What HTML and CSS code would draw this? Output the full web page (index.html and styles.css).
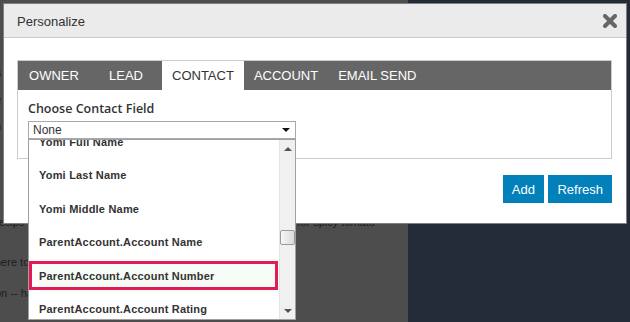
FILE: index.html
```html
<!DOCTYPE html>
<html lang="en">

<head>
  <meta charset="UTF-8">
  <meta name="viewport" content="width=device-width, initial-scale=1.0">
  <title>Personalize</title>
  <link rel="stylesheet" href="styles.css">
</head>

<body>
  <!-- page behind the modal -->
  <div class="page">
    <div class="content">
      <p class="intro">a</p>
      <p class="intro">e</p>
      <p class="intro">n</p>
      <p class="line line-split"><span>recipe</span><span>for spicy tomato</span></p>
      <p class="line">here to</p>
      <p class="line">on -- ha</p>
    </div>
    <div class="side"></div>
  </div>

  <div class="dialog">
    <div class="dialog-head">
      <span class="dialog-title">Personalize</span>
      <svg class="dialog-close" width="14" height="14" viewBox="0 0 14 14">
        <path d="M2 2 L12 12 M12 2 L2 12" stroke="#666" stroke-width="4" stroke-linecap="round" fill="none" />
      </svg>
    </div>
    <div class="dialog-body">
      <div class="panel">
        <ul class="tabs">
          <li class="tab">OWNER</li>
          <li class="tab">LEAD</li>
          <li class="tab active">CONTACT</li>
          <li class="tab">ACCOUNT</li>
          <li class="tab">EMAIL SEND</li>
        </ul>
        <div class="panel-body">
          <div class="field-label">Choose Contact Field</div>
          <div class="select">
            <span>None</span>
            <span class="select-arrow"></span>
            <!-- open option list -->
            <div class="dropdown">
              <div class="options">
                <div class="options-inner">
                  <div class="option">Yomi Full Name</div>
                  <div class="option">Yomi Last Name</div>
                  <div class="option">Yomi Middle Name</div>
                  <div class="option">ParentAccount.Account Name</div>
                  <div class="option marked">ParentAccount.Account Number</div>
                  <div class="option">ParentAccount.Account Rating</div>
                </div>
              </div>
              <div class="scrollbar">
                <div class="scroll-btn"><span class="tri-up"></span></div>
                <div class="scroll-track"><div class="scroll-thumb"></div></div>
                <div class="scroll-btn"><span class="tri-down"></span></div>
              </div>
            </div>
          </div>
        </div>
      </div>
      <div class="actions">
        <button class="btn">Add</button>
        <button class="btn">Refresh</button>
      </div>
    </div>
  </div>
</body>

</html>
```

FILE: styles.css
```css
* {
  padding: 0;
  margin: 0;
  box-sizing: border-box;
}

body {
  width: 630px;
  height: 322px;
  overflow: hidden;
  font-family: "Liberation Sans", Arial, sans-serif;
  background-color: #232b36;
}

/* 背景页面 */
.page {
  display: flex;
  height: 322px;
}

.content {
  width: 408px;
  background-color: #4d4d4d;
  color: #1c1c1c;
  font-size: 11px;
  padding-top: 64px;
}

.content p {
  margin-left: -5px;
  white-space: nowrap;
}

.intro {
  line-height: 16px;
  margin-bottom: 11px;
}

.line {
  line-height: 16px;
}

.line-split {
  display: flex;
  justify-content: space-between;
  width: 380px;
  margin-top: 80px;
  margin-bottom: 24px;
}

.line-split + .line {
  margin-bottom: 15px;
}

.side {
  flex: 1;
}

/* 弹窗 */
.dialog {
  position: absolute;
  left: 3px;
  top: 3px;
  width: 624px;
  height: 221px;
  background-color: #fff;
  border: 1px solid #808080;
  color: #333;
}

.dialog-head {
  height: 34px;
  background-color: #ebebeb;
  border-bottom: 1px solid #c9c9c9;
  display: flex;
  align-items: center;
  justify-content: space-between;
  padding: 1px 9px 0 13px;
}

.dialog-title {
  font-size: 13px;
  color: #333;
}

.dialog-close {
  display: block;
}

.dialog-body {
  padding: 22px 14px 20px 13px;
}

.panel {
  border: 1px solid #ccc;
}

.tabs {
  list-style: none;
  display: flex;
  height: 29px;
  background-color: #666;
}

.tab {
  min-width: 72px;
  padding: 0 10px;
  line-height: 29px;
  text-align: center;
  font-size: 13px;
  color: #fff;
}

.tab.active {
  background-color: #fff;
  color: #333;
}

.panel-body {
  padding: 10px 10px 19px;
}

.field-label {
  font-family: "Open Sans", "Liberation Sans", sans-serif;
  font-weight: 600;
  font-size: 12.5px;
  line-height: 17px;
  color: #333;
}

.select {
  position: relative;
  width: 268px;
  height: 18px;
  margin-top: 4px;
  border: 1px solid #a9a9a9;
  padding-left: 4px;
  font-size: 12px;
  line-height: 16px;
  color: #333;
  display: flex;
  align-items: center;
  justify-content: space-between;
}

.select-arrow {
  margin-right: 5px;
  border-left: 4px solid transparent;
  border-right: 4px solid transparent;
  border-top: 4px solid #111;
}

/* 下拉列表 */
.dropdown {
  position: absolute;
  top: 17px;
  left: -1px;
  width: 268px;
  height: 181px;
  background-color: #fff;
  border: 1px solid #a0a0a0;
  display: flex;
  z-index: 2;
}

.options {
  flex: 1;
  overflow: hidden;
}

.options-inner {
  margin-top: -14.7px;
}

.option {
  position: relative;
  height: 33.4px;
  display: flex;
  align-items: center;
  padding-left: 10px;
  font-size: 11px;
  font-weight: bold;
  letter-spacing: 0.2px;
  color: #333;
}

.option.marked {
  background-color: #f6fbf6;
  background-clip: content-box;
}

.option.marked::after {
  content: "";
  position: absolute;
  top: 2px;
  bottom: 2px;
  left: 0;
  right: 1px;
  border: 3px solid #e11a58;
}

.scrollbar {
  width: 16px;
  background-color: #f0f0f0;
  border-left: 1px solid #e4e4e4;
  display: flex;
  flex-direction: column;
}

.scroll-btn {
  height: 17px;
  display: flex;
  align-items: center;
  justify-content: center;
}

.tri-up {
  border-left: 4px solid transparent;
  border-right: 4px solid transparent;
  border-bottom: 4px solid #555;
}

.tri-down {
  border-left: 4px solid transparent;
  border-right: 4px solid transparent;
  border-top: 4px solid #555;
}

.scroll-track {
  flex: 1;
}

.scroll-thumb {
  height: 15px;
  margin-top: 73px;
  border: 1px solid #9a9a9a;
  border-radius: 2px;
  background: linear-gradient(to right, #f6f6f6, #dadada);
}

/* 按钮 */
.actions {
  display: flex;
  justify-content: flex-end;
  gap: 4.5px;
  margin-top: 16px;
}

.btn {
  height: 28px;
  padding: 0 9px;
  border: none;
  background-color: #0180ba;
  color: #fff;
  font-family: "Liberation Sans", Arial, sans-serif;
  font-size: 13px;
}
```
